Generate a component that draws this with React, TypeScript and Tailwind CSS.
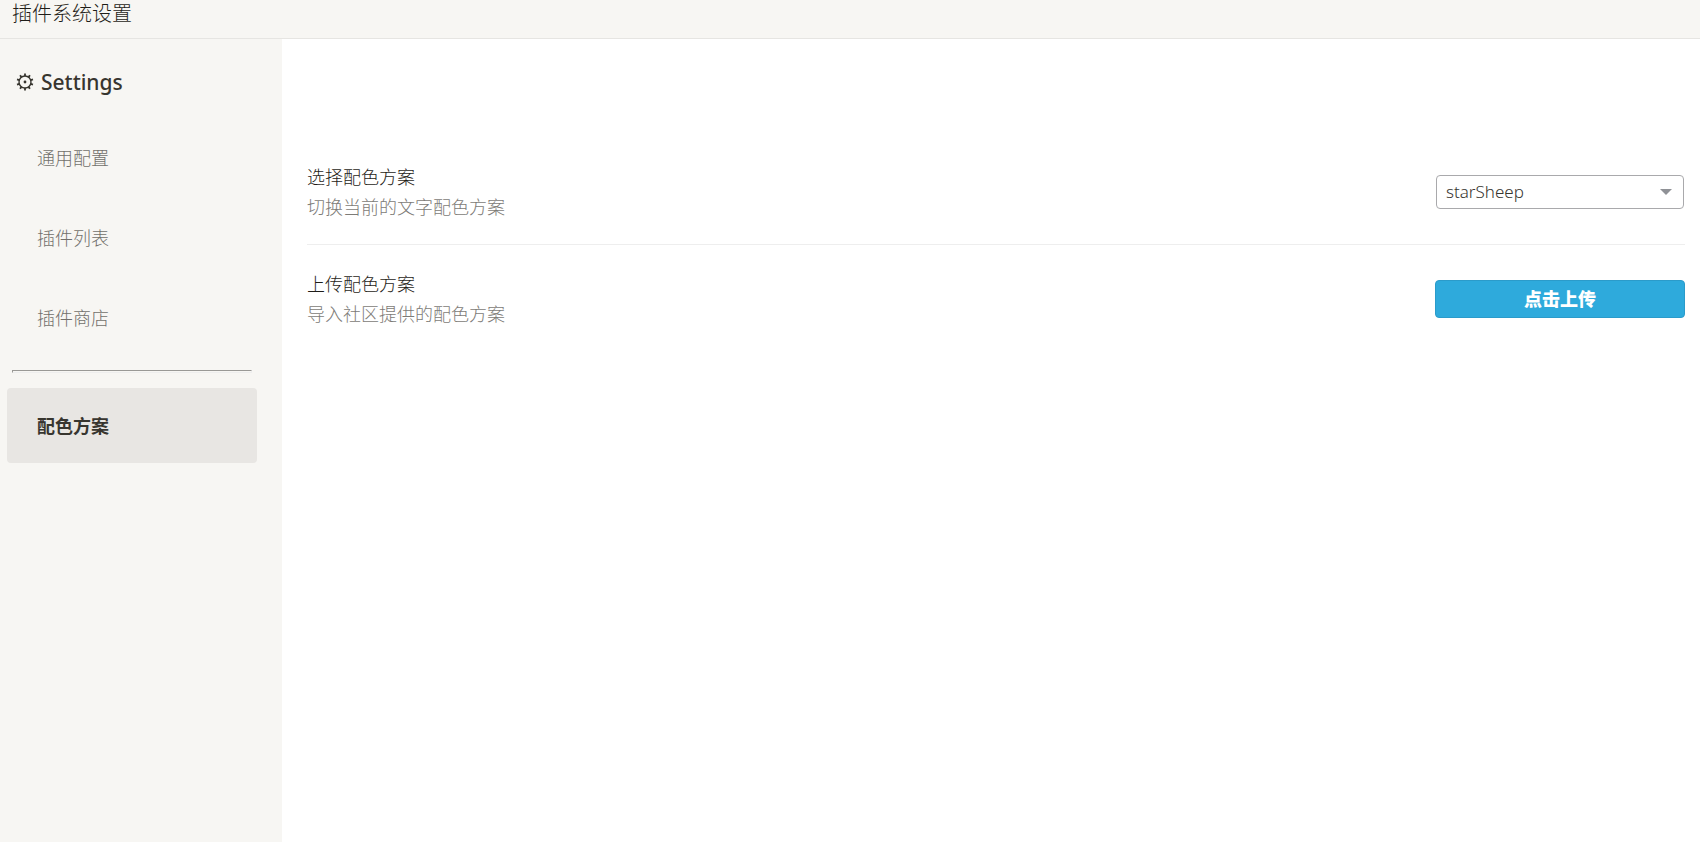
import React, { useState } from "react";
import clsx from "clsx";

interface NavItemProps {
  label: string;
  active: boolean;
  onSelect: (label: string) => void;
}

interface SettingRowProps {
  title: string;
  description: string;
  htmlFor: string;
  children: React.ReactNode;
}

const mainTabs = ["通用配置", "插件列表", "插件商店"];
const pluginTabs = ["配色方案"];
const schemes = ["starSheep"];

const GEAR_TEETH = [0, 36, 72, 108, 144, 180, 216, 252, 288, 324];

const GearIcon = () => (
  <svg viewBox="0 0 18 18" className="size-[18px] shrink-0" fill="none" stroke="currentColor" aria-hidden="true">
    <circle cx="9" cy="9" r="6" strokeWidth="1.4" />
    <circle cx="9" cy="9" r="1.4" fill="currentColor" stroke="none" />
    {GEAR_TEETH.map((angle) => (
      <path key={angle} d="M9 0.6V3" strokeWidth="1.8" transform={`rotate(${angle} 9 9)`} />
    ))}
  </svg>
);

const NavItem = ({ label, active, onSelect }: NavItemProps) => (
  <button
    type="button"
    onClick={() => onSelect(label)}
    className={clsx(
      "h-[75px] w-full rounded px-[30px] text-left text-lg",
      active ? "bg-[#e8e6e3] font-bold text-[#37352f]" : "font-light text-[#72706b]"
    )}
  >
    {label}
  </button>
);

const SettingRow = ({ title, description, htmlFor, children }: SettingRowProps) => (
  <div className="flex items-center justify-between border-b border-[#eeeeee] pt-6 pb-[22px] last:border-b-0">
    <div className="text-lg/[30px] font-light">
      <label htmlFor={htmlFor} className="block text-[#1f1d18]">
        {title}
      </label>
      <p className="text-[#7d7b77]">{description}</p>
    </div>
    <div className="w-[250px] shrink-0">{children}</div>
  </div>
);

const App = () => {
  const [tab, setTab] = useState("配色方案");
  const [scheme, setScheme] = useState("starSheep");

  return (
    <div className="flex min-h-screen flex-col bg-white font-['Noto_Sans','Noto_Sans_CJK_SC',sans-serif] text-[#37352f]">
      <header className="border-b border-[#e6e5e2] bg-[#f7f6f3] px-3 pb-[10px]">
        <h1 className="text-xl/[28px] font-light text-[#1f1d18]">插件系统设置</h1>
      </header>

      <div className="flex flex-1">
        {/* Sidebar */}
        <aside className="w-[282px] shrink-0 bg-[#f7f6f3] pr-[25px] pl-[7px]">
          <h2 className="flex items-center gap-[7px] pt-7 pl-[9px] text-[21px]/[30px] font-medium">
            <GearIcon />
            Settings
          </h2>
          <nav className="pt-[23px]">
            <div className="flex flex-col gap-[5px]">
              {mainTabs.map((label) => (
                <NavItem key={label} label={label} active={label === tab} onSelect={setTab} />
              ))}
            </div>
            <hr className="mx-[5px] my-[15px] h-[3px] border border-t-[#9a9996] border-r-[#eeeeee] border-b-[#eeeeee] border-l-[#9a9996]" />
            {pluginTabs.map((label) => (
              <NavItem key={label} label={label} active={label === tab} onSelect={setTab} />
            ))}
          </nav>
        </aside>

        {/* Content */}
        <main className="flex-1 pt-[99px] pr-[15px] pl-[25px]">
          <SettingRow title="选择配色方案" description="切换当前的文字配色方案" htmlFor="scheme">
            <div className="relative px-px">
              <select
                id="scheme"
                value={scheme}
                onChange={(e) => setScheme(e.target.value)}
                className="h-[34px] w-full appearance-none rounded border border-[#a9a9ac] bg-white px-[9px] text-[17px] font-light"
              >
                {schemes.map((name) => (
                  <option key={name}>{name}</option>
                ))}
              </select>
              <svg
                viewBox="0 0 12 6"
                className="pointer-events-none absolute top-1/2 right-[13px] h-[6px] w-3 -translate-y-1/2 fill-[#8f9196]"
                aria-hidden="true"
              >
                <path d="M0 0H12L6 6Z" />
              </svg>
            </div>
          </SettingRow>

          <SettingRow title="上传配色方案" description="导入社区提供的配色方案" htmlFor="upload">
            <button
              id="upload"
              type="button"
              className="h-[38px] w-full rounded border border-[#2b9bca] bg-[#2eaadc] text-lg font-black text-white"
            >
              点击上传
            </button>
          </SettingRow>
        </main>
      </div>
    </div>
  );
};

export default App;
